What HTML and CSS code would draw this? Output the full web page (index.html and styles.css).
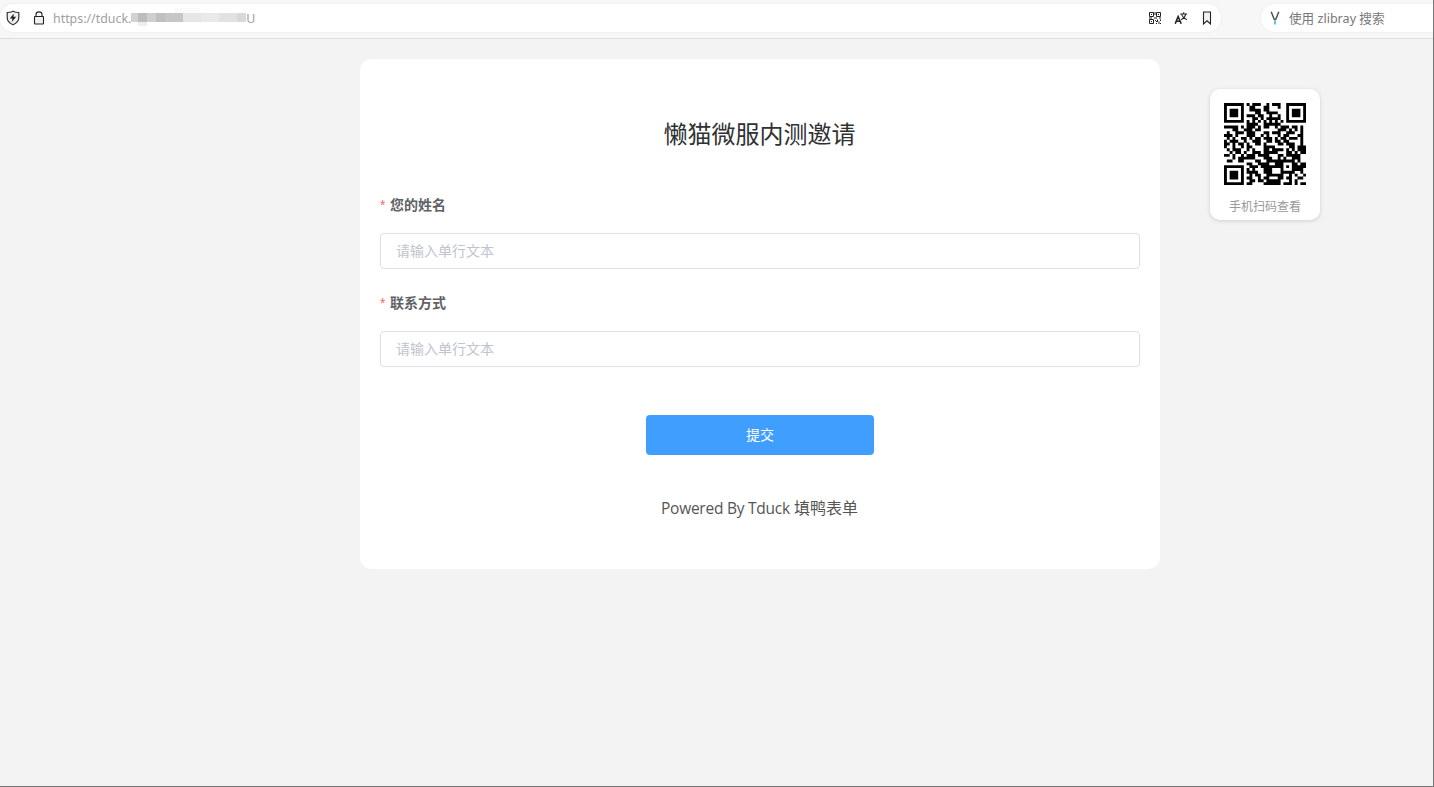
FILE: index.html
```html
<!DOCTYPE html>
<html lang="zh-CN">
<head>
    <meta charset="UTF-8">
    <meta name="viewport" content="width=device-width, initial-scale=1.0">
    <title>懒猫微服内测邀请</title>
    <link rel="stylesheet" href="styles.css">
</head>
<body>
    <!-- Browser toolbar -->
    <header class="toolbar">
        <div class="address-bar">
            <svg class="icon shield" width="14" height="16" viewBox="0 0 14 16">
                <path d="M7 1.2 C5 2.2 3 2.5 1.2 2.5 V7.5 C1.2 11 3.8 13.4 7 14.8 C10.2 13.4 12.8 11 12.8 7.5 V2.5 C11 2.5 9 2.2 7 1.2 Z" fill="#f1f1f1" stroke="#333" stroke-width="1.2"/>
                <path d="M7.8 3.5 L3.8 8.6 H6.4 L5.8 12 L10.2 6.8 H7.4 Z" fill="#222"/>
            </svg>
            <svg class="icon lock" width="12" height="14" viewBox="0 0 12 14">
                <rect x="1.5" y="5.5" width="9" height="7.5" rx="0.5" fill="#f1f1f1" stroke="#222" stroke-width="1.1"/>
                <path d="M3 5.5 V3.6 C3 0 9 0 9 3.6 V5.5" fill="none" stroke="#222" stroke-width="1.1"/>
            </svg>
            <div class="url">
                <span>https://tduck.</span>
                <svg class="mask" width="118" height="20" viewBox="0 0 118 20" shape-rendering="crispEdges">
                    <rect x="1" y="5" width="7" height="9" fill="#d2d2d2"/>
                    <rect x="8" y="5" width="9" height="9" fill="#bdbdbd"/>
                    <rect x="17" y="5" width="9" height="9" fill="#cfcfcf"/>
                    <rect x="26" y="5" width="9" height="9" fill="#bfbfbf"/>
                    <rect x="35" y="5" width="18" height="9" fill="#c6c6c6"/>
                    <rect x="8" y="14" width="9" height="4" fill="#eee"/>
                    <rect x="44" y="0" width="26" height="5" fill="#fafafa"/>
                    <rect x="53" y="5" width="18" height="9" fill="#e6e6e6"/>
                    <rect x="71" y="5" width="18" height="9" fill="#e9e9e9"/>
                    <rect x="89" y="5" width="18" height="9" fill="#e2e2e2"/>
                    <rect x="107" y="5" width="9" height="9" fill="#d9d9d9"/>
                </svg>
                <span>U</span>
            </div>
            <div class="actions">
                <svg width="14" height="14" viewBox="0 0 14 14" fill="none" stroke="#222">
                    <path d="M1.5 1.5 H5.5 V5.5 H1.5 Z M8.5 1.5 H12.5 V5.5 H8.5 Z M1.5 8.5 H5.5 V12.5 H1.5 Z"/>
                    <path d="M3 3.5 H4 M10 3.5 H11 M3 10.5 H4 M7 1 V4 M1 7 H4 M6 7 H9 M11 7 H13 M7.5 9 V10 M8 10.5 H10 M9.5 8.5 V10 M8 12.5 H9 M12.5 8.5 V10 M11 10.5 V13 M12 12.5 H13"/>
                </svg>
                <svg width="14" height="14" viewBox="0 0 14 14" fill="none" stroke="#222">
                    <path d="M1.2 12.8 L4.1 5.5 L7.2 12.8 M2.3 10.3 H6.1" stroke-width="1.6"/>
                    <path d="M6.2 3 H13.2 M9.7 1.2 V3 M11.8 3 C11.2 5.6 9.6 7.6 7.2 8.8 M7.6 3.6 C8.6 6.2 10.4 7.8 12.9 8.8" stroke-width="1.1"/>
                </svg>
                <svg width="14" height="14" viewBox="0 0 14 14">
                    <path d="M3.5 1 H10.5 V13 L7 9.8 L3.5 13 Z" fill="#f3f3f3" stroke="#222" stroke-width="1.1"/>
                </svg>
            </div>
        </div>
        <div class="search-bar">
            <svg width="10" height="14" viewBox="0 0 10 14">
                <path d="M1.2 0.8 L4.3 8.6 H5.7 L8.8 0.8" fill="none" stroke="#555" stroke-width="1.5"/>
                <path d="M5 9.3 V13.4" stroke="#62c4e8" stroke-width="2"/>
            </svg>
            <span>使用 zlibray 搜索</span>
        </div>
    </header>

    <main class="page">
        <form class="form-container">
            <h1>懒猫微服内测邀请</h1>
            <div class="form-group">
                <label for="name">您的姓名</label>
                <input type="text" id="name" placeholder="请输入单行文本">
            </div>
            <div class="form-group">
                <label for="contact">联系方式</label>
                <input type="text" id="contact" placeholder="请输入单行文本">
            </div>
            <button type="submit">提交</button>
            <p class="powered"><span>Powered By Tduck</span> 填鸭表单</p>
        </form>
        <aside class="qr-card">
            <svg id="qr" width="82" height="82" viewBox="0 0 29 29"></svg>
            <p>手机扫码查看</p>
        </aside>
    </main>

    <script src="script.js"></script>
</body>
</html>
```
FILE: styles.css
```css
* {
    margin: 0;
    padding: 0;
    box-sizing: border-box;
}

body {
    height: 787px;
    overflow: hidden;
    background: #f3f3f3;
    border-right: 1px solid #777;
    border-bottom: 1px solid #777;
    font-family: "Noto Sans", "Noto Sans CJK SC", sans-serif;
}

svg {
    display: block;
    flex: none;
}

.toolbar {
    display: flex;
    gap: 40px;
    height: 39px;
    padding-top: 4px;
    background: #f7f7f7;
    border-bottom: 1px solid #dcdcdc;
}

.address-bar,
.search-bar {
    display: flex;
    align-items: center;
    height: 28px;
    background: #fff;
    box-shadow: 0 0 1px 1px #f0f0f0;
    font-size: 12px;
}

.address-bar {
    width: 1221px;
    padding: 0 7px 0 6px;
    border-radius: 14px;
}

.lock {
    margin-left: 13px;
}

.url {
    display: flex;
    align-items: center;
    margin-left: 8px;
    color: #a0a0a0;
    font-size: 12.4px;
}

.mask {
    margin-left: -1px;
    margin-right: -2px;
}

.actions {
    display: flex;
    gap: 12px;
    margin-left: auto;
}

.search-bar {
    flex: 1;
    gap: 9px;
    padding-left: 9px;
    border-radius: 14px 0 0 14px;
    color: #777;
    font-size: 12.6px;
    white-space: nowrap;
}

.search-bar span {
    padding-bottom: 2px;
}

.page {
    display: flex;
    align-items: flex-start;
    gap: 50px;
    padding: 20px 0 0 360px;
}

.form-container {
    width: 800px;
    height: 510px;
    padding: 57px 20px 0;
    border-radius: 12px;
    background: #fff;
}

h1 {
    height: 36px;
    margin-bottom: 35px;
    padding-right: 1px;
    color: #303133;
    font-size: 24px;
    font-weight: 400;
    line-height: 36px;
    text-align: center;
}

.form-group {
    margin-bottom: 16px;
}

label {
    display: block;
    height: 36px;
    margin-bottom: 10px;
    color: #606266;
    font-size: 14px;
    font-weight: 700;
    line-height: 36px;
}

label::before {
    content: "*";
    display: inline-block;
    width: 6px;
    height: 12px;
    margin-right: 4px;
    color: #f56c6c;
    font-family: "Liberation Sans", sans-serif;
    font-size: 14px;
    font-weight: 400;
    line-height: 16px;
}

input {
    display: block;
    width: 100%;
    height: 36px;
    padding: 0 15px 2px;
    border: 1px solid #dcdfe6;
    border-radius: 4px;
    font-family: inherit;
    font-size: 14px;
}

input::placeholder {
    color: #c0c4cc;
}

button {
    display: block;
    width: 228px;
    height: 40px;
    margin: 48px auto 0;
    padding-bottom: 2px;
    border: none;
    border-radius: 4px;
    background: #409eff;
    color: #fff;
    font-family: inherit;
    font-size: 14px;
}

.powered {
    margin-top: 41px;
    padding-right: 1px;
    color: #555;
    font-size: 16px;
    line-height: 24px;
    text-align: center;
    white-space: nowrap;
}

.powered span {
    font-family: "Open Sans", "Noto Sans", sans-serif;
    font-size: 15.5px;
    letter-spacing: -0.25px;
}

.qr-card {
    width: 110px;
    height: 131px;
    margin-top: 30px;
    padding: 14px 0 0 14px;
    border-radius: 10px;
    background: #fff;
    box-shadow: 0 1px 4px rgba(0, 0, 0, 0.15);
}

.qr-card p {
    width: 82px;
    margin-top: 13px;
    color: #999;
    font-size: 12px;
    line-height: 18px;
    text-align: center;
}
```
FILE: script.js
```js
const rows = [
    '11111110101110010111001111111',
    '10000010011000110001001000001',
    '10111010011110110000001011101',
    '10111010000110011110001011101',
    '10111010111011001001001011101',
    '10000010001101011111001000001',
    '11111110101010101010101111111',
    '00000000111100111111000000000',
    '11111010111010110010111011010',
    '00011001110110000001110101010',
    '01001110111000110111001110010',
    '11101000111001010001011000110',
    '01010011010110111010110111010',
    '10111001001110011011011000010',
    '11010110100110100001101110010',
    '10010010110000111100000110111',
    '01011100101000110111101010111',
    '00101101001110111110001101011',
    '11010010111011110001101111100',
    '00010111111000111001010011100',
    '01100110000110011111111110100',
    '00000000110011110011100011011',
    '11111110011101111111101011111',
    '10000010101000111000100011110',
    '10111010111100111000111110010',
    '10111010010110011111100101001',
    '10111010110010110001101100110',
    '10000010011011011111000101000',
    '11111110110000111111011101011'
];

const qr = document.getElementById('qr');
let d = '';

rows.forEach((row, y) => {
    for (let x = 0; x < row.length; x++) {
        if (row[x] === '1') {
            d += `M${x} ${y}h1.02v1.02h-1.02z`;
        }
    }
});

const path = document.createElementNS('http://www.w3.org/2000/svg', 'path');
path.setAttribute('d', d);
qr.appendChild(path);
```
